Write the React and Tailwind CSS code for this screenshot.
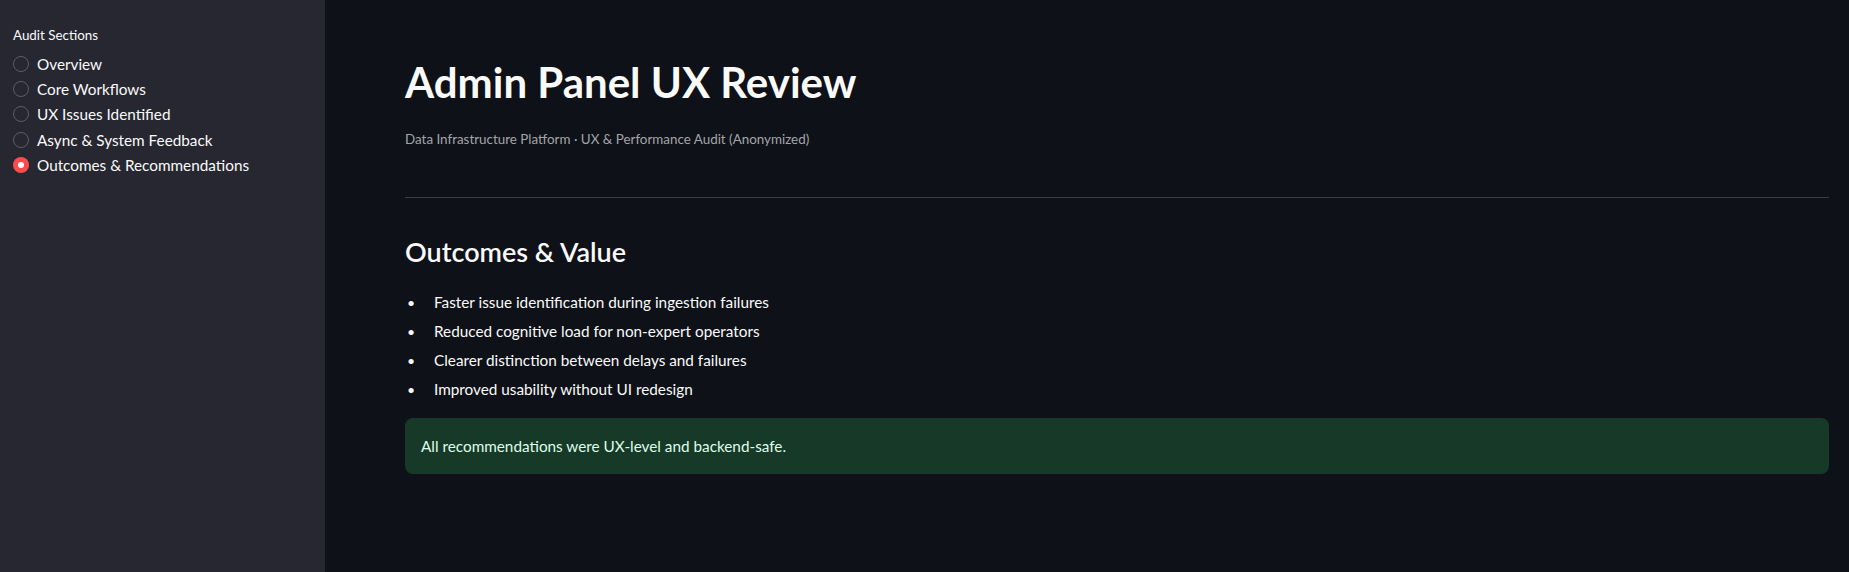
import React from "react";

const sections = [
  "Overview",
  "Core Workflows",
  "UX Issues Identified",
  "Async & System Feedback",
  "Outcomes & Recommendations",
];

const outcomes = [
  "Faster issue identification during ingestion failures",
  "Reduced cognitive load for non-expert operators",
  "Clearer distinction between delays and failures",
  "Improved usability without UI redesign",
];

function Radio({ checked }) {
  if (checked) {
    return (
      <span className="flex h-4 w-4 shrink-0 items-center justify-center rounded-full bg-[#ff4b4b]">
        <span className="h-[6px] w-[6px] rounded-full bg-white" />
      </span>
    );
  }
  return <span className="h-4 w-4 shrink-0 rounded-full border border-[#5c5e67]" />;
}

export default function App() {
  return (
    <div
      className="flex h-[572px] w-full overflow-hidden bg-[#0e1117] text-[#fafafa]"
      style={{ fontFamily: "Lato, 'Noto Sans', sans-serif" }}
    >
      <aside className="w-[325px] shrink-0 bg-[#262730] pl-[13px] pt-[26px]">
        <div className="text-[13.4px] leading-[18px] text-[#fafafa]">Audit Sections</div>
        <div className="mt-[7px] flex flex-col">
          {sections.map((s, i) => (
            <div key={s} className="flex h-[25.4px] items-center gap-[8px]">
              <Radio checked={i === sections.length - 1} />
              <span className="text-[15.3px] leading-[20px]">{s}</span>
            </div>
          ))}
        </div>
      </aside>
      <main className="flex-1 pl-[80px] pr-[20px] pt-[56px]">
        <h1 className="text-[42px] font-bold leading-[53px] text-[#fafafa]">Admin Panel UX Review</h1>
        <p className="mt-[20px] text-[13.4px] leading-[20px] text-[#a3a5aa]">
          Data Infrastructure Platform · UX &amp; Performance Audit (Anonymized)
        </p>
        <div className="mt-[48px] h-px bg-[#3b3d44]" />
        <h3 className="mt-[37px] text-[27px] font-semibold leading-[34px]">Outcomes &amp; Value</h3>
        <ul className="mt-[19px] flex flex-col">
          {outcomes.map((o) => (
            <li key={o} className="flex h-[29px] items-center text-[15.3px]">
              <span className="w-[29px] pl-[2px] text-[14px]">•</span>
              <span>{o}</span>
            </li>
          ))}
        </ul>
        <div className="mt-[14px] flex h-[56px] items-center rounded-lg bg-[#173928] px-4 text-[15.3px] text-[#dffde9]">
          All recommendations were UX-level and backend-safe.
        </div>
      </main>
    </div>
  );
}
